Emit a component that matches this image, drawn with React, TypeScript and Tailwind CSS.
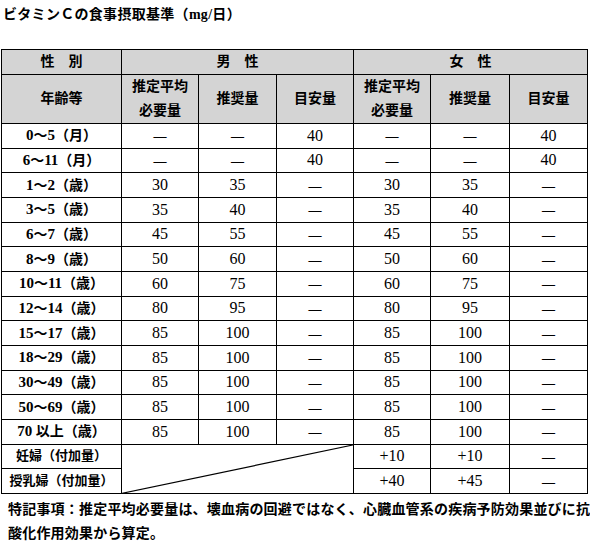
import React from 'react';

const serif = { fontFamily: '"Liberation Serif", "Noto Sans CJK JP", serif' };

const rows: [string, string[]][] = [
  ['0～5（月）', ['—', '—', '40', '—', '—', '40']],
  ['6～11（月）', ['—', '—', '40', '—', '—', '40']],
  ['1～2（歳）', ['30', '35', '—', '30', '35', '—']],
  ['3～5（歳）', ['35', '40', '—', '35', '40', '—']],
  ['6～7（歳）', ['45', '55', '—', '45', '55', '—']],
  ['8～9（歳）', ['50', '60', '—', '50', '60', '—']],
  ['10～11（歳）', ['60', '75', '—', '60', '75', '—']],
  ['12～14（歳）', ['80', '95', '—', '80', '95', '—']],
  ['15～17（歳）', ['85', '100', '—', '85', '100', '—']],
  ['18～29（歳）', ['85', '100', '—', '85', '100', '—']],
  ['30～49（歳）', ['85', '100', '—', '85', '100', '—']],
  ['50～69（歳）', ['85', '100', '—', '85', '100', '—']],
  ['70 以上（歳）', ['85', '100', '—', '85', '100', '—']],
];

const th = 'border border-black bg-[#d4d4d4] text-center font-bold text-[14px] leading-[24px]';
const td = 'border border-black text-center text-[16px] leading-[20px]';
const label = 'border border-black text-center font-bold text-[14px] leading-[20px] whitespace-nowrap';

// value cell: the dash is drawn a bit shorter than a full em dash
const Val: React.FC<{ v: string }> = ({ v }) =>
  v === '—' ? <span className="text-[13px] font-bold">—</span> : <>{v}</>;

// age label: digits a touch larger than the kanji, like the print
const Age: React.FC<{ text: string }> = ({ text }) => (
  <>
    {text.split(/(\d+)/).map((part, i) =>
      /^\d+$/.test(part) ? (
        <span key={i} className="text-[15px]">{part}</span>
      ) : (
        <span key={i}>{part}</span>
      )
    )}
  </>
);

const App: React.FC = () => {
  return (
    <div className="w-[590px] h-[557px] bg-white text-black overflow-hidden" style={serif}>
      {/* Title */}
      <div className="h-[49px] pl-[3px] pt-[4px] text-[14px] font-bold leading-[22px] tracking-[0.3px]">
        ビタミンＣの食事摂取基準（mg/日）
      </div>

      {/* Table */}
      <table className="ml-[1px] w-[586px] table-fixed border-collapse">
        <colgroup>
          <col className="w-[120px]" />
          <col className="w-[77px]" />
          <col className="w-[78px]" />
          <col className="w-[77px]" />
          <col className="w-[77px]" />
          <col className="w-[79px]" />
          <col className="w-[78px]" />
        </colgroup>
        <thead>
          <tr className="h-[25px]">
            <th className={th}>性　別</th>
            <th className={th} colSpan={3}>男　性</th>
            <th className={th} colSpan={3}>女　性</th>
          </tr>
          <tr className="h-[49px]">
            <th className={th}>年齢等</th>
            <th className={th}>推定平均<br />必要量</th>
            <th className={th}>推奨量</th>
            <th className={th}>目安量</th>
            <th className={th}>推定平均<br />必要量</th>
            <th className={th}>推奨量</th>
            <th className={th}>目安量</th>
          </tr>
        </thead>
        <tbody>
          {rows.map(([age, vals]) => (
            <tr key={age} className="h-[24.67px]">
              <td className={label}><Age text={age} /></td>
              {vals.map((v, i) => (
                <td key={i} className={td}><Val v={v} /></td>
              ))}
            </tr>
          ))}
          <tr className="h-[24.67px]">
            <td className={`${label} !text-[13px]`}>妊婦（付加量）</td>
            <td className="relative border border-black p-0" colSpan={3} rowSpan={2}>
              <svg className="absolute inset-0 h-full w-full" preserveAspectRatio="none" viewBox="0 0 100 100">
                <line x1="0" y1="100" x2="100" y2="0" stroke="black" strokeWidth="1.2" vectorEffect="non-scaling-stroke" />
              </svg>
            </td>
            <td className={td}>+10</td>
            <td className={td}>+10</td>
            <td className={td}><Val v="—" /></td>
          </tr>
          <tr className="h-[24.67px]">
            <td className={`${label} !text-[13px]`}>授乳婦（付加量）</td>
            <td className={td}>+40</td>
            <td className={td}>+45</td>
            <td className={td}><Val v="—" /></td>
          </tr>
        </tbody>
      </table>

      {/* Footnote */}
      <div className="mt-[4px] pl-[8px] text-[14px] font-bold leading-[24px] tracking-[0.2px] whitespace-nowrap">
        特記事項：推定平均必要量は、壊血病の回避ではなく、心臓血管系の疾病予防効果並びに抗
        <br />
        酸化作用効果から算定。
      </div>
    </div>
  );
};

export default App;
